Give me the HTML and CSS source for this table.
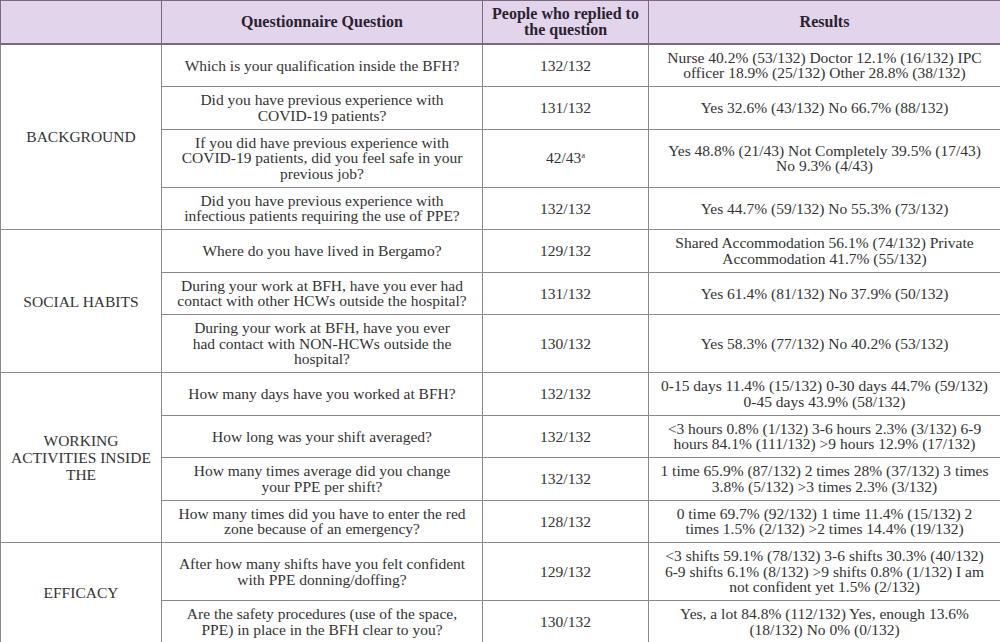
FILE: index.html
```html
<!DOCTYPE html>
<html lang="en">
<head>
<meta charset="utf-8">
<title>Questionnaire results</title>
<link rel="stylesheet" href="styles.css">
</head>
<body>
<table class="qt">
  <colgroup>
    <col class="c-sec">
    <col class="c-q">
    <col class="c-n">
    <col class="c-r">
  </colgroup>
  <thead>
    <tr>
      <th></th>
      <th>Questionnaire Question</th>
      <th>People who replied to<br>the question</th>
      <th>Results</th>
    </tr>
  </thead>
  <tbody>
    <tr>
      <td class="sec" rowspan="4">BACKGROUND</td>
      <td>Which is your qualification inside the BFH?</td>
      <td>132/132</td>
      <td>Nurse 40.2% (53/132) Doctor 12.1% (16/132) IPC<br>officer 18.9% (25/132) Other 28.8% (38/132)</td>
    </tr>
    <tr>
      <td>Did you have previous experience with<br>COVID-19 patients?</td>
      <td>131/132</td>
      <td>Yes 32.6% (43/132) No 66.7% (88/132)</td>
    </tr>
    <tr>
      <td>If you did have previous experience with<br>COVID-19 patients, did you feel safe in your<br>previous job?</td>
      <td>42/43<sup>a</sup></td>
      <td>Yes 48.8% (21/43) Not Completely 39.5% (17/43)<br>No 9.3% (4/43)</td>
    </tr>
    <tr>
      <td>Did you have previous experience with<br>infectious patients requiring the use of PPE?</td>
      <td>132/132</td>
      <td>Yes 44.7% (59/132) No 55.3% (73/132)</td>
    </tr>
    <tr>
      <td class="sec" rowspan="3">SOCIAL HABITS</td>
      <td>Where do you have lived in Bergamo?</td>
      <td>129/132</td>
      <td>Shared Accommodation 56.1% (74/132) Private<br>Accommodation 41.7% (55/132)</td>
    </tr>
    <tr>
      <td>During your work at BFH, have you ever had<br>contact with other HCWs outside the hospital?</td>
      <td>131/132</td>
      <td>Yes 61.4% (81/132) No 37.9% (50/132)</td>
    </tr>
    <tr>
      <td>During your work at BFH, have you ever<br>had contact with NON-HCWs outside the<br>hospital?</td>
      <td>130/132</td>
      <td>Yes 58.3% (77/132) No 40.2% (53/132)</td>
    </tr>
    <tr>
      <td class="sec" rowspan="4">WORKING<br>ACTIVITIES INSIDE<br>THE</td>
      <td>How many days have you worked at BFH?</td>
      <td>132/132</td>
      <td>0-15 days 11.4% (15/132) 0-30 days 44.7% (59/132)<br>0-45 days 43.9% (58/132)</td>
    </tr>
    <tr>
      <td>How long was your shift averaged?</td>
      <td>132/132</td>
      <td>&lt;3 hours 0.8% (1/132) 3-6 hours 2.3% (3/132) 6-9<br>hours 84.1% (111/132) &gt;9 hours 12.9% (17/132)</td>
    </tr>
    <tr>
      <td>How many times average did you change<br>your PPE per shift?</td>
      <td>132/132</td>
      <td>1 time 65.9% (87/132) 2 times 28% (37/132) 3 times<br>3.8% (5/132) &gt;3 times 2.3% (3/132)</td>
    </tr>
    <tr>
      <td>How many times did you have to enter the red<br>zone because of an emergency?</td>
      <td>128/132</td>
      <td>0 time 69.7% (92/132) 1 time 11.4% (15/132) 2<br>times 1.5% (2/132) &gt;2 times 14.4% (19/132)</td>
    </tr>
    <tr>
      <td class="sec" rowspan="2">EFFICACY</td>
      <td>After how many shifts have you felt confident<br>with PPE donning/doffing?</td>
      <td>129/132</td>
      <td>&lt;3 shifts 59.1% (78/132) 3-6 shifts 30.3% (40/132)<br>6-9 shifts 6.1% (8/132) &gt;9 shifts 0.8% (1/132) I am<br>not confident yet 1.5% (2/132)</td>
    </tr>
    <tr>
      <td>Are the safety procedures (use of the space,<br>PPE) in place in the BFH clear to you?</td>
      <td>130/132</td>
      <td>Yes, a lot 84.8% (112/132) Yes, enough 13.6%<br>(18/132) No 0% (0/132)</td>
    </tr>
  </tbody>
</table>
</body>
</html>
```

FILE: styles.css
```css
html, body {
  margin: 0;
  padding: 0;
  background: #ffffff;
}

.qt {
  width: 1000px;
  table-layout: fixed;
  border-collapse: collapse;
  font-family: "Liberation Serif", "Times New Roman", serif;
  font-size: 15.5px;
  line-height: 15.5px;
  color: #333333;
}

.c-sec { width: 161px; }
.c-q { width: 321px; }
.c-n { width: 166px; }
.c-r { width: 352px; }

.qt th,
.qt td {
  border: 1px solid #8a8a8a;
  padding: 5.25px 4px;
  text-align: center;
  vertical-align: middle;
  white-space: nowrap;
}

.qt th {
  background: #e2d4ea;
  color: #2a2230;
  font-size: 16px;
  font-weight: bold;
  height: 31px;
  border-color: #7a6a80;
}

.qt thead tr {
  border-bottom: 2px solid #7a6a80;
}

.qt td.sec {
  white-space: normal;
  line-height: 17px;
}

.qt sup {
  font-size: 8px;
  line-height: 0;
  vertical-align: 5px;
}
```
